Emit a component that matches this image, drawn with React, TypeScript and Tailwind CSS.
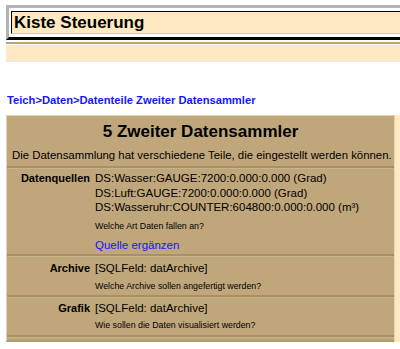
const Sep = () => (
  <div className="h-[3px] border-t-2 border-[#a98f68] bg-[#c9b38a]" />
);

const Row = ({ label, children }: { label: string; children: React.ReactNode }) => (
  <div className="flex">
    <div className="w-[88px] shrink-0 pr-[5px] text-right font-bold text-[11px] leading-[14.5px]">
      {label}
    </div>
    <div className="flex-1 text-[11.5px] leading-[14.5px]">{children}</div>
  </div>
);

const Hint = ({ text }: { text: string }) => (
  <div className="text-[8.8px] leading-[12px]">{text}</div>
);

export default function App() {
  return (
    <div className="w-[400px] h-[349px] overflow-hidden bg-white text-black font-['Liberation_Sans',Arial,sans-serif]">
      <div className="pt-[5px] pl-[6px]">
        <div className="border-t-[3px] border-l-[3px] border-b-[3px] border-t-[#b3b3b3] border-l-[#b3b3b3] border-b-black bg-white pt-[3px] pl-[2px] pb-[3px]">
          <div className="h-[23px] border-t border-l border-black border-b border-b-[#c8c8c8] bg-[#ffe9c2] pl-[2px] text-[17px] font-bold leading-[21px]">
            Kiste Steuerung
          </div>
        </div>
        <div className="mt-[2px] h-[2px] bg-[#c0a77b]" />
        <div className="mt-[1px] h-[16px] bg-[#ffe9c2]" />
        <div className="h-[1px] bg-[#e8e8f0]" />
      </div>

      <div className="mt-[31px] pl-[7px] text-[11.2px] font-bold leading-[14px] text-[#1515ff]">
        Teich&gt;Daten&gt;Datenteile Zweiter Datensammler
      </div>

      <div className="mt-[8px] ml-[6px] flex h-[227px]">
        <div className="w-[388px] border-t border-l border-[#e2d4b2] border-b-2 border-b-[#b09a72] bg-[#c0a77b]">
          <div className="h-[29px] text-center text-[17px] font-bold leading-[31px]">
            5 Zweiter Datensammler
          </div>
          <div className="h-[21px] pl-[5px] text-[11.4px] leading-[20px]">
            Die Datensammlung hat verschiedene Teile, die eingestellt werden können.
          </div>
          <Sep />
          <div className="pt-[2px] pb-[2px]">
            <Row label="Datenquellen">
              <div>DS:Wasser:GAUGE:7200:0.000:0.000 (Grad)</div>
              <div>DS:Luft:GAUGE:7200:0.000:0.000 (Grad)</div>
              <div>DS:Wasseruhr:COUNTER:604800:0.000:0.000 (m³)</div>
              <div className="mt-[5px]">
                <Hint text="Welche Art Daten fallen an?" />
              </div>
              <div className="mt-[6px] text-[#1515ff]">Quelle ergänzen</div>
            </Row>
          </div>
          <Sep />
          <div className="pt-[4px] pb-[3px]">
            <Row label="Archive">
              <div>[SQLFeld: datArchive]</div>
              <div className="mt-[4px]">
                <Hint text="Welche Archive sollen angefertigt werden?" />
              </div>
            </Row>
          </div>
          <Sep />
          <div className="pt-[3px] pb-[4px]">
            <Row label="Grafik">
              <div>[SQLFeld: datArchive]</div>
              <div className="mt-[4px]">
                <Hint text="Wie sollen die Daten visualisiert werden?" />
              </div>
            </Row>
          </div>
          <Sep />
        </div>
        <div className="flex-1 border-l border-[#e8d5ad] bg-[#ffe9c2]" />
      </div>
    </div>
  );
}
